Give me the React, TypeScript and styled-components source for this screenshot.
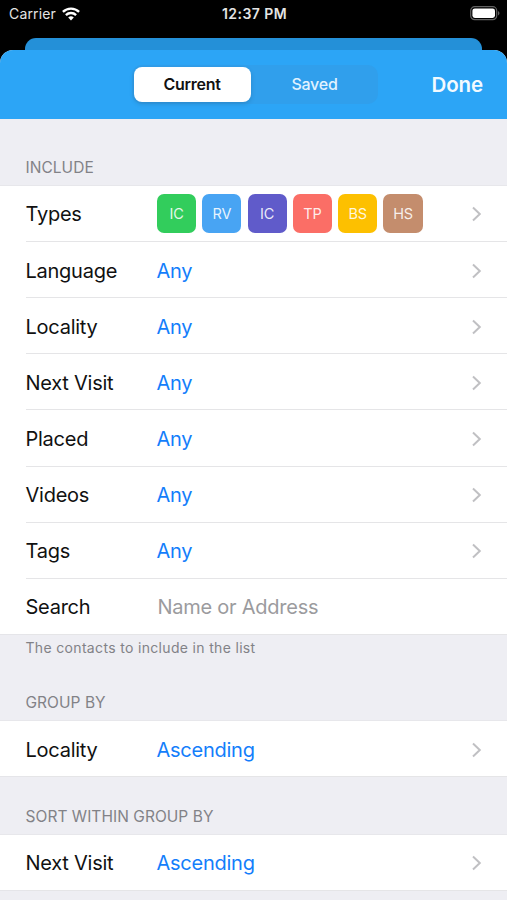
import React from "react";
import styled, { createGlobalStyle } from "styled-components";

const GlobalStyle = createGlobalStyle`
  * { box-sizing: border-box; }
  body { margin: 0; background: #000; }
`;

const Phone = styled.div`
  width: 507px;
  height: 900px;
  overflow: hidden;
  display: flex;
  flex-direction: column;
  background: #000;
  color: #111;
  font-family: Inter, "Liberation Sans", sans-serif;
`;

const StatusBar = styled.div`
  height: 38px;
  flex: none;
  display: grid;
  grid-template-columns: 1fr auto 1fr;
  align-items: start;
  padding: 5px 7px 0 9px;
  color: #e4e4e4;
  font-size: 14px;
  line-height: 18px;
`;

const Carrier = styled.div`
  display: flex;
  align-items: center;
  gap: 6px;
  letter-spacing: 0.15px;
`;

const Clock = styled.div`
  font-weight: 600;
  font-size: 14px;
  letter-spacing: 0.45px;
`;

const Battery = styled.svg`
  justify-self: end;
  margin-top: 1px;
`;

const BackCard = styled.div`
  height: 12px;
  flex: none;
  margin: 0 25px;
  border-radius: 11px 11px 0 0;
  background: #2490d8;
`;

const Sheet = styled.main`
  flex: 1;
  min-height: 0;
  border-radius: 13px 13px 0 0;
  overflow: hidden;
  background: #eeeef3;
`;

const NavBar = styled.header`
  height: 68.5px;
  display: grid;
  grid-template-columns: 1fr auto 1fr;
  align-items: center;
  padding: 0 24px 0 26px;
  background: #2ca5f6;
`;

const Segments = styled.div`
  grid-column: 2;
  display: flex;
  width: 246px;
  height: 39px;
  padding: 2px;
  border-radius: 10px;
  background: #309fec;
`;

const Segment = styled.button<{ $active?: boolean }>`
  flex: ${(p) => (p.$active ? "0 0 117px" : "1")};
  border: 0;
  padding: ${(p) => (p.$active ? "0" : "0 0 0 3px")};
  border-radius: 8px;
  background: ${(p) => (p.$active ? "#fff" : "transparent")};
  color: ${(p) => (p.$active ? "#111" : "#e0f2ff")};
  font: ${(p) => (p.$active ? 600 : 500)} 16px Inter, sans-serif;
  letter-spacing: -0.25px;
  box-shadow: ${(p) => (p.$active ? "0 2px 5px rgba(0, 0, 0, 0.14)" : "none")};
`;

const Done = styled.button`
  justify-self: end;
  border: 0;
  padding: 0;
  background: none;
  color: #f2faff;
  font: 600 20.5px Inter, sans-serif;
  letter-spacing: -0.1px;
`;

const SectionHead = styled.h2<{ $height: number }>`
  height: ${(p) => p.$height}px;
  margin: 0;
  padding: 0 25.5px 8px;
  display: flex;
  align-items: flex-end;
  color: #828287;
  font-weight: 400;
  font-size: 15.5px;
  line-height: 20px;
  letter-spacing: 0.04px;
`;

const List = styled.div`
  background: #fff;
  box-shadow: 0 -1px 0 #e7e7eb, inset 0 -1px 0 #e5e5e9;
`;

const RowBox = styled.div`
  height: 56.15px;
  padding-left: 25.5px;
`;

const RowInner = styled.div`
  height: 100%;
  display: grid;
  grid-template-columns: 131px 1fr auto;
  align-items: center;
  padding-top: 2px;
  padding-right: 25px;
  border-bottom: 1px solid #e5e5e7;
  font-size: 20px;
  line-height: 26px;
  letter-spacing: -0.25px;
`;

const Value = styled.span`
  color: #147efb;
`;

const SearchField = styled.input`
  width: 100%;
  border: 0;
  padding: 0 0 0 1px;
  outline: 0;
  background: none;
  font: inherit;
  letter-spacing: inherit;

  &::placeholder {
    color: #9b9b9e;
    opacity: 1;
  }
`;

const Badges = styled.div`
  display: flex;
  gap: 6.1px;
  margin-bottom: 2px;
  padding-left: 0.5px;
`;

const Badge = styled.span<{ $color: string }>`
  width: 39.2px;
  height: 39px;
  padding-top: 1px;
  border-radius: 7px;
  display: flex;
  align-items: center;
  justify-content: center;
  background: ${(p) => p.$color};
  color: rgba(255, 255, 255, 0.88);
  font-size: 14.5px;
  letter-spacing: -0.2px;
`;

const Footnote = styled.p`
  height: 27px;
  margin: 0;
  padding: 4px 25.5px 0;
  color: #828287;
  font-size: 14px;
  line-height: 18px;
  letter-spacing: 0.33px;
`;

const Chevron = () => (
  <svg width="11" height="16" viewBox="0 0 11 16" fill="none" stroke="#c0c0c3" strokeWidth="2">
    <path d="M2 1.5 8.8 8 2 14.5" />
  </svg>
);

const Row = ({ label, children, link = true }: { label: string; children: React.ReactNode; link?: boolean }) => (
  <RowBox>
    <RowInner>
      <span>{label}</span>
      {children}
      {link && <Chevron />}
    </RowInner>
  </RowBox>
);

const types = [
  ["IC", "#32cd5c"],
  ["RV", "#48a4f3"],
  ["IC", "#605bca"],
  ["TP", "#fb6e66"],
  ["BS", "#fdc000"],
  ["HS", "#c48d6d"],
];

const filters = ["Language", "Locality", "Next Visit", "Placed", "Videos", "Tags"];

export default function App() {
  return (
    <Phone>
      <GlobalStyle />
      <StatusBar>
        <Carrier>
          Carrier
          <svg width="18" height="14" viewBox="0 0 18 14" fill="none" stroke="#fff" strokeWidth="2.4">
            <path d="M.9 4.9a11.7 11.7 0 0 1 16.2 0" />
            <path d="M3.9 8.1a7.4 7.4 0 0 1 10.2 0" />
            <path d="M9 13.4 6.2 10.5a4 4 0 0 1 5.6 0Z" fill="#fff" stroke="none" />
          </svg>
        </Carrier>
        <Clock>12:37 PM</Clock>
        <Battery width="30" height="15" viewBox="0 0 30 15">
          <rect x=".7" y=".7" width="26" height="13" rx="4" fill="none" stroke="#626262" strokeWidth="1.2" />
          <rect x="2.4" y="2.4" width="22.6" height="9.6" rx="2.4" fill="#fff" />
          <path d="M28 5c2 .8 2 3.6 0 4.4Z" fill="#626262" />
        </Battery>
      </StatusBar>
      <BackCard />
      <Sheet>
        <NavBar>
          <Segments>
            <Segment $active>Current</Segment>
            <Segment>Saved</Segment>
          </Segments>
          <Done>Done</Done>
        </NavBar>
        <SectionHead $height={67.3}>INCLUDE</SectionHead>
        <List>
          <Row label="Types">
            <Badges>
              {types.map(([name, color]) => (
                <Badge key={color} $color={color}>{name}</Badge>
              ))}
            </Badges>
          </Row>
          {filters.map((name) => (
            <Row key={name} label={name}>
              <Value>Any</Value>
            </Row>
          ))}
          <Row label="Search" link={false}>
            <SearchField placeholder="Name or Address" />
          </Row>
        </List>
        <Footnote>The contacts to include in the list</Footnote>
        <SectionHead $height={59.2}>GROUP BY</SectionHead>
        <List>
          <Row label="Locality">
            <Value>Ascending</Value>
          </Row>
        </List>
        <SectionHead $height={57.5}>SORT WITHIN GROUP BY</SectionHead>
        <List>
          <Row label="Next Visit">
            <Value>Ascending</Value>
          </Row>
        </List>
      </Sheet>
    </Phone>
  );
}
